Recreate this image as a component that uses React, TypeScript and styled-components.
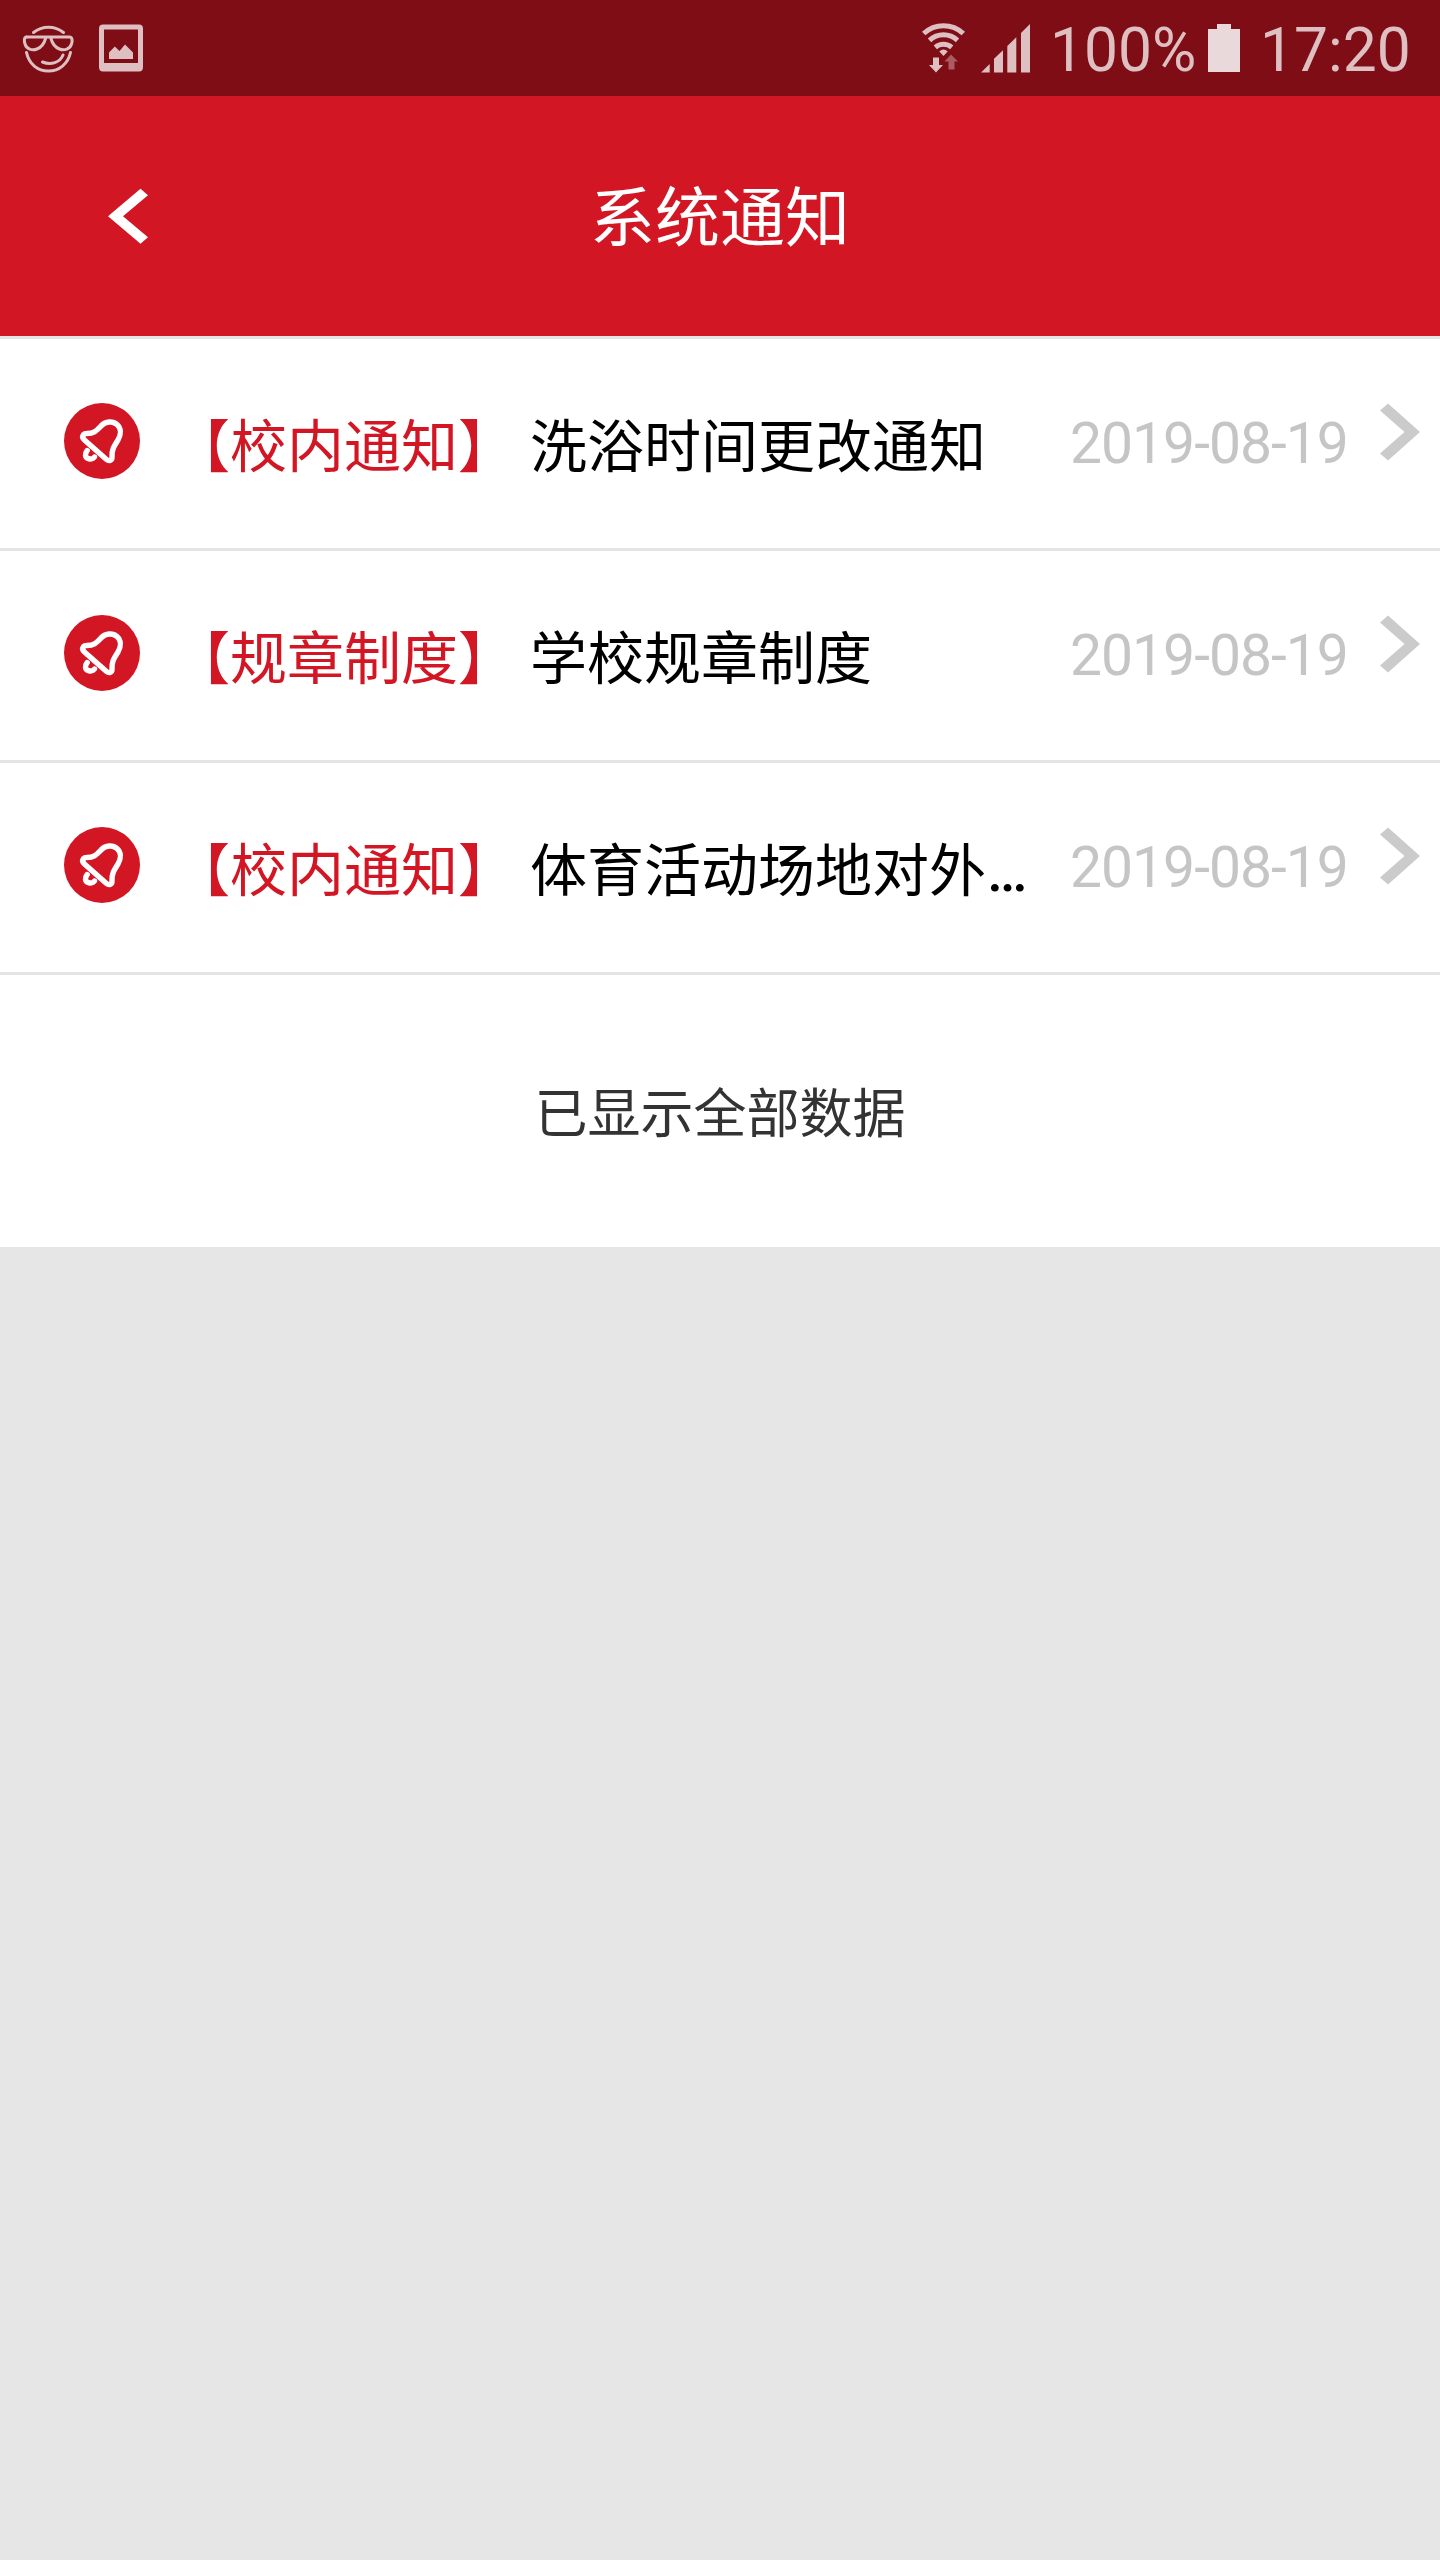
import React from "react";
import styled, { createGlobalStyle } from "styled-components";

const RED = "#d21624";
const STATUS_INK = "#debfc2";

const GlobalStyle = createGlobalStyle`
  * { box-sizing: border-box; }
  html, body { margin: 0; padding: 0; background: #e6e6e6; }
  body {
    font-family: Roboto, "Noto Sans CJK SC", sans-serif;
    -webkit-font-smoothing: antialiased;
  }
`;

const Screen = styled.div`
  width: 1440px;
  min-height: 2560px;
  display: flex;
  flex-direction: column;
  background: #e6e6e6;
`;

const StatusBar = styled.div`
  height: 96px;
  flex: none;
  display: flex;
  justify-content: space-between;
  padding: 0 30px 0 22px;
  background: #7e0d15;
  color: ${STATUS_INK};
`;

const StatusGroup = styled.div`
  display: flex;
  align-items: center;
`;

const StatusIcon = styled.svg<{ $gap?: number }>`
  display: block;
  flex: none;
  margin-right: ${(p) => p.$gap ?? 0}px;
`;

const StatusText = styled.span<{ $width: number }>`
  width: ${(p) => p.$width}px;
  font-size: 60.5px;
  line-height: 70px;
  padding-top: 5px;
  white-space: nowrap;
`;

const Header = styled.header`
  height: 240px;
  flex: none;
  display: grid;
  grid-template-columns: 256px 1fr 256px;
  align-items: center;
  background: ${RED};
  color: #fff;
`;

const BackButton = styled.button`
  display: flex;
  padding: 0 0 0 108px;
  border: 0;
  background: none;
`;

const Title = styled.h1`
  margin: 0;
  padding-top: 6px;
  font-size: 65px;
  line-height: 80px;
  font-weight: 400;
  text-align: center;
`;

const List = styled.ul`
  margin: 0;
  padding: 0;
  list-style: none;
  background: #fff;
  border-top: 3px solid #e4e4e4;
`;

const Row = styled.li`
  height: 212px;
  display: flex;
  align-items: flex-start;
  padding: 64px 20px 0 64px;
  border-bottom: 3px solid #e4e4e4;
  font-size: 57px;
  line-height: 89px;
  white-space: nowrap;
`;

const Bell = styled.svg`
  display: block;
  flex: none;
  margin-right: 33px;
`;

const Category = styled.span`
  width: 357px;
  flex: none;
  color: ${RED};
`;

const Subject = styled.span`
  flex: 1;
  min-width: 0;
  overflow: hidden;
  text-overflow: ellipsis;
  color: #000;
`;

const Ellipsis = styled.span`
  margin-left: 1px;
  font-weight: 500;
`;

const DateText = styled.time`
  width: 310px;
  flex: none;
  line-height: 81px;
  font-size: 57px;
  letter-spacing: -1px;
  color: #c5c5c5;
`;

const Chevron = styled.svg`
  display: block;
  flex: none;
`;

const EndNote = styled.p`
  margin: 0;
  height: 272px;
  flex: none;
  padding-top: 4px;
  background: #fff;
  color: #333;
  font-size: 53px;
  line-height: 272px;
  text-align: center;
`;

const FaceIcon = () => (
  <StatusIcon $gap={25} width="52" height="50" viewBox="0 0 52 50" fill="none" stroke={STATUS_INK} strokeWidth="3" strokeLinecap="round">
    <path d="M11.500 9.500 A24 24 0 0 1 41.500 9.500" />
    <path d="M4.500 14 H47.500 C50.500 14 50.500 18 49.500 21 C48 26 42.500 28 37.500 26 C32 24 30 19.500 28.800 15" />
    <path d="M4.500 14 C2 14 2 18 3 21 C4.500 26 10 28 15 26 C20.500 24 22.500 19.500 23.700 15" />
    <path d="M4.500 29.500 C7 41 15.500 48 26.500 48 C37 48 46 41 48.500 29.500" />
    <path d="M20.500 39 C29 42.500 38 39.500 41 32" />
  </StatusIcon>
);

const PictureIcon = () => (
  <StatusIcon width="44" height="48" viewBox="0 0 44 48">
    <path
      fill={STATUS_INK}
      fillRule="evenodd"
      d="M4 .5H40Q44 .5 44 4.500V43Q44 47.500 40 47.500H4Q0 47.500 0 43V4.500Q0 .5 4 .5ZM5 5.500V39H39V5.500Z"
    />
    <path fill={STATUS_INK} d="M10 35V28.500L15.800 22.500L20.500 27L26 20.500L34 28.500V35Z" />
  </StatusIcon>
);

const WifiIcon = () => (
  <StatusIcon $gap={15} width="44" height="50" viewBox="0 0 44 50">
    <g fill="none" stroke={STATUS_INK} strokeWidth="5">
      <path d="M1.700 10.500 A29 29 0 0 1 41.300 10.500" />
      <path d="M7.500 17.300 A20.500 20.500 0 0 1 35.500 17.300" />
      <path d="M13.300 24.300 A12.500 12.500 0 0 1 29.700 24.300" />
    </g>
    <path fill={STATUS_INK} d="M17.300 28.500Q21.500 24.500 25.700 28.500L21.500 33Z" />
    <path fill={STATUS_INK} d="M11 34.500H17V42H21L14 49.500L7 42H11Z" />
    <path fill={STATUS_INK} opacity=".45" d="M29 31.500L36 38.500H32.500V46.500H26.500V38.500H22.500Z" />
  </StatusIcon>
);

const SignalIcon = () => (
  <StatusIcon $gap={20} width="49" height="49" viewBox="0 0 49 49" fill={STATUS_INK}>
    <path d="M0 48.500L8.700 40V48.500Z" />
    <path d="M13 48.500V34.800L22 26.200V48.500Z" />
    <path d="M26.300 48.500V22L35.300 13.300V48.500Z" />
    <path d="M40 48.500V9L49 0V48.500Z" />
  </StatusIcon>
);

const BatteryIcon = () => (
  <StatusIcon $gap={20} width="32" height="48" viewBox="0 0 32 48">
    <path fill="#ead9db" d="M9 0H23V5H32V48H0V5H9Z" />
  </StatusIcon>
);

const BellIcon = () => (
  <Bell width="76" height="76" viewBox="0 0 76 76">
    <circle cx="38" cy="38" r="38" fill={RED} />
    <g fill="none" stroke="#fff" strokeWidth="5.400" strokeLinecap="round" strokeLinejoin="round">
      <path d="M19.500 31.500C17.800 34 19 36 21 37.500L42.500 56.500C45 58.500 48 57.500 48 54.500C47.500 46 50.500 42.500 54 37C57.500 31 57 25 53 21.500C48.500 17.500 41.500 18.500 37.500 22.500C32 28 30 30.500 23 30.500C21 30.500 20.200 30.700 19.500 31.500Z" />
      <path d="M23.200 47.500C20.800 50.500 21 54 23.500 55.300C26 56.500 29 56 30.500 54" />
    </g>
  </Bell>
);

const notices = [
  { category: "【校内通知】", subject: "洗浴时间更改通知", cut: false, date: "2019-08-19" },
  { category: "【规章制度】", subject: "学校规章制度", cut: false, date: "2019-08-19" },
  { category: "【校内通知】", subject: "体育活动场地对外", cut: true, date: "2019-08-19" },
];

export default function App() {
  return (
    <Screen>
      <GlobalStyle />
      <StatusBar>
        <StatusGroup>
          <FaceIcon />
          <PictureIcon />
        </StatusGroup>
        <StatusGroup>
          <WifiIcon />
          <SignalIcon />
          <StatusText $width={158}>100%</StatusText>
          <BatteryIcon />
          <StatusText $width={150}>17:20</StatusText>
        </StatusGroup>
      </StatusBar>
      <Header>
        <BackButton aria-label="返回">
          <svg width="40" height="56" viewBox="0 0 40 56">
            <path fill="#fff" d="M0 28.300L32.500 .8L40 7.300L15 28.300L40 49.300L32.500 55.800Z" />
          </svg>
        </BackButton>
        <Title>系统通知</Title>
      </Header>
      <List>
        {notices.map((n, i) => (
          <Row key={i}>
            <BellIcon />
            <Category>{n.category}</Category>
            <Subject>
              {n.subject}
              {n.cut && <Ellipsis>…</Ellipsis>}
            </Subject>
            <DateText>{n.date}</DateText>
            <Chevron width="40" height="58" viewBox="0 0 40 58">
              <path fill="#cbcbcb" d="M8 .5L40 29L8 57.500L0 50.500L24.500 29L0 7.500Z" />
            </Chevron>
          </Row>
        ))}
      </List>
      <EndNote>已显示全部数据</EndNote>
    </Screen>
  );
}
